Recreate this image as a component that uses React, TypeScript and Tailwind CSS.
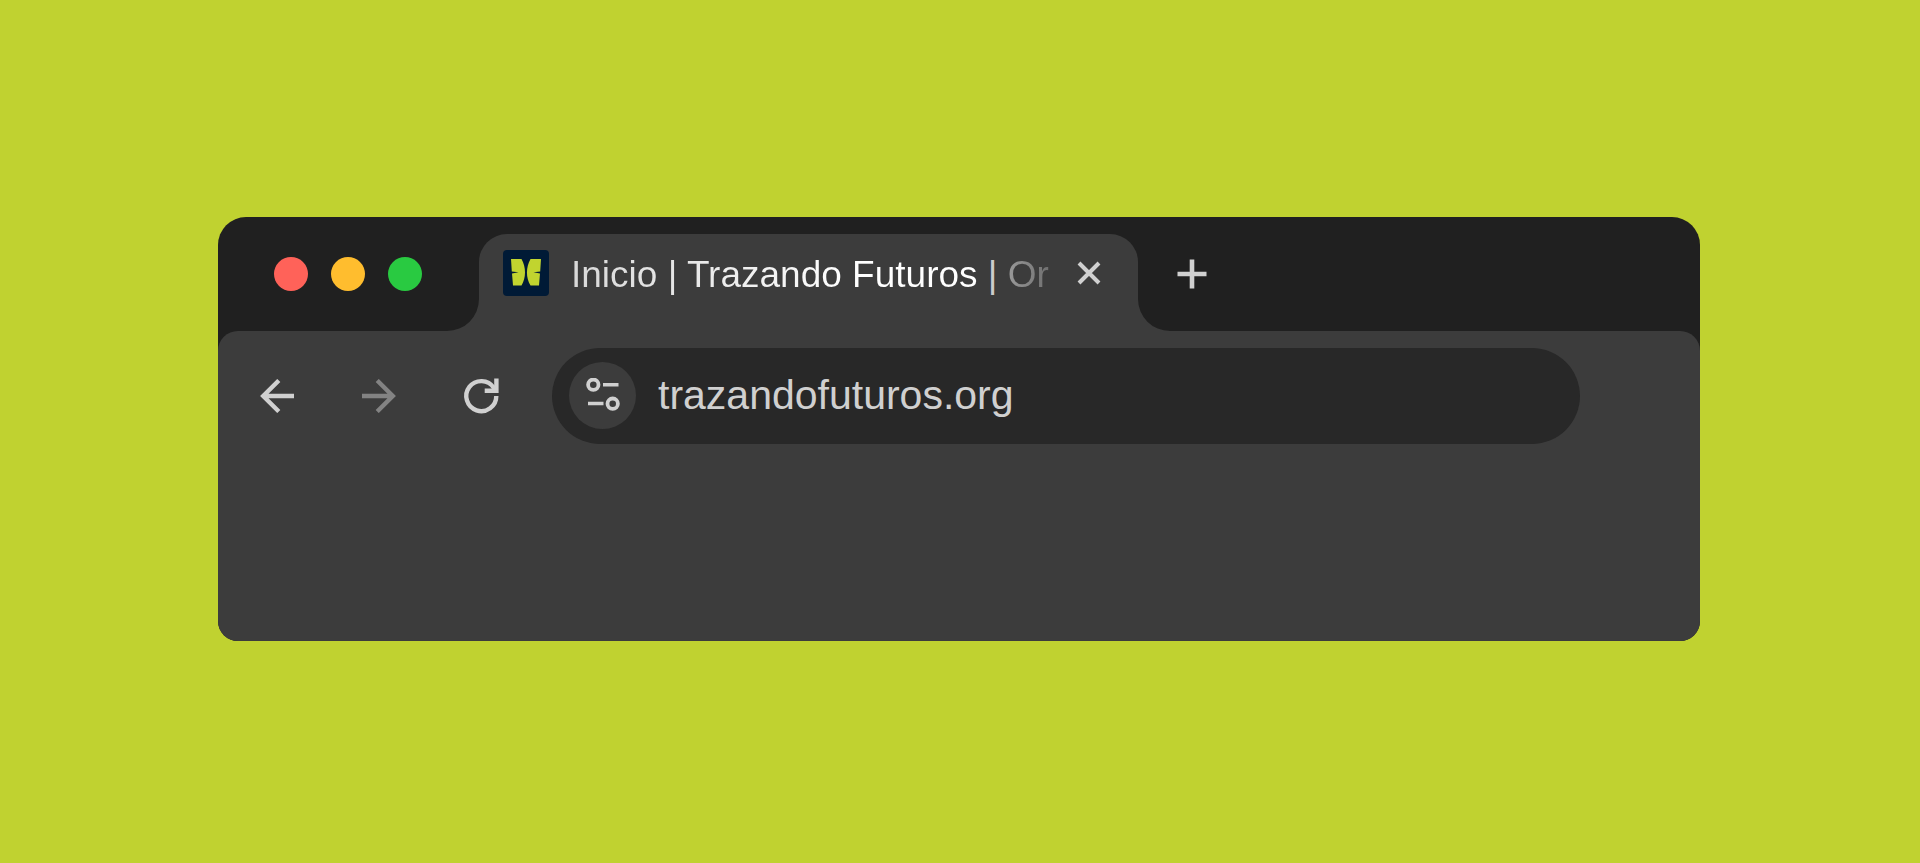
function TrafficLights() {
  return (
    <div className="flex shrink-0 gap-[23px]">
      <button type="button" aria-label="Close window" className="size-[34px] rounded-full bg-[#ff6259]" />
      <button type="button" aria-label="Minimize window" className="size-[34px] rounded-full bg-[#ffbd2e]" />
      <button type="button" aria-label="Maximize window" className="size-[34px] rounded-full bg-[#29ca41]" />
    </div>
  );
}

function Favicon() {
  return (
    <svg viewBox="0 0 46 46" className="size-[46px] shrink-0" aria-hidden="true">
      <rect width="46" height="46" rx="4" fill="#001a36" />
      <g fill="#c1d42f">
        <path d="M8 9H18.500C23.200 17 23.200 28 18.500 35.500H10L9 23.500L15.500 22.300L8.800 21.500Z" />
        <path d="M38 9H27.500C22.800 17 22.800 28 27.500 35.500H36L37 23.500L30.500 22.300L37.200 21.500Z" />
      </g>
    </svg>
  );
}

function TabFlare({ flip = false }: { flip?: boolean }) {
  return (
    <svg
      viewBox="0 0 32 32"
      className={flip ? "size-8 shrink-0 -scale-x-100 self-end" : "size-8 shrink-0 self-end"}
      aria-hidden="true"
    >
      <path d="M32 0V32H0A32 32 0 0 0 32 0Z" fill="#3c3c3c" />
    </svg>
  );
}

function Tab() {
  return (
    <div className="flex h-[97px] w-[659px] shrink-0 items-center rounded-t-[28px] bg-[#3c3c3c] pb-5 pl-6">
      <Favicon />
      <span className="ml-[22px] w-[484px] whitespace-nowrap pt-1 text-[37px] leading-[46px]">
        <span className="bg-linear-to-r from-[#d8d8d8] to-white to-70% bg-clip-text text-transparent">
          Inicio | Trazando Futuros
        </span>
        <span className="text-[#cccccc]"> | </span>
        <span className="bg-linear-to-r from-[#999999] to-[#707070] bg-clip-text text-transparent">Or</span>
      </span>
      <button type="button" aria-label="Close tab" className="ml-[22px] shrink-0">
        <svg viewBox="0 0 24 24" className="size-6" fill="none" stroke="#d0d0d0" strokeWidth="4">
          <path d="M2 2L22 22M22 2L2 22" />
        </svg>
      </button>
    </div>
  );
}

function TabStrip() {
  return (
    <div className="flex h-[114px] items-end pl-14">
      <div className="flex h-[114px] shrink-0 items-center">
        <TrafficLights />
      </div>
      <div className="ml-[25px] flex h-[97px] shrink-0">
        <TabFlare />
        <Tab />
        <TabFlare flip />
      </div>
      <button type="button" aria-label="New tab" className="mb-[42px] ml-[7px] shrink-0">
        <svg viewBox="0 0 30 30" className="size-[30px]" fill="none" stroke="#d0d0d0" strokeWidth="4.600">
          <path d="M15 0.500V29.500M0.500 15H29.500" />
        </svg>
      </button>
    </div>
  );
}

function ArrowIcon() {
  return (
    <svg viewBox="0 0 34 34" className="size-[34px]" fill="none" stroke="currentColor" strokeWidth="4.400">
      <path d="M34 17H3M18.800 1.500L3.200 17L18.800 32.500" />
    </svg>
  );
}

function NavButtons() {
  return (
    <div className="flex shrink-0 items-center gap-[68px]">
      <button type="button" aria-label="Back" className="text-[#d0d0d0]">
        <ArrowIcon />
      </button>
      <button type="button" aria-label="Forward" disabled className="-scale-x-100 text-[#838383]">
        <ArrowIcon />
      </button>
      <button type="button" aria-label="Reload">
        <svg
          viewBox="0 0 34 34"
          className="size-[34px] overflow-visible"
          fill="none"
          stroke="#d0d0d0"
          strokeWidth="4.400"
        >
          <path d="M32.300 17A15 15 0 1 1 29.800 8.800L31.500 11.800" />
          <path d="M32.400 -0.500V11.700H20.700" />
        </svg>
      </button>
    </div>
  );
}

function AddressBar() {
  return (
    <div className="ml-[54px] flex h-24 min-w-0 flex-1 items-center rounded-full bg-[#282828] pb-0.5 pl-[17px] pr-10">
      <button
        type="button"
        aria-label="View site information"
        className="flex size-[67px] shrink-0 items-center justify-center rounded-full bg-[#3c3c3c]"
      >
        <svg viewBox="0 0 34 34" className="size-[34px]" fill="none" stroke="#d0d0d0" strokeWidth="3.800">
          <circle cx="7.300" cy="6.700" r="5.200" />
          <path d="M17 6.700H32.500M2 25.500H17.500" strokeWidth="3.500" />
          <circle cx="26.700" cy="25.700" r="5.200" />
        </svg>
      </button>
      <input
        type="text"
        aria-label="Address"
        defaultValue="trazandofuturos.org"
        className="ml-[22px] h-12 min-w-0 flex-1 bg-transparent text-[41px] leading-[48px] text-[#d0d0d0] outline-none"
      />
    </div>
  );
}

export default function App() {
  return (
    <main className="flex min-h-screen items-center bg-[#c0d230] pb-[5px] pl-[218px] pr-[220px] font-['Liberation_Sans',Arial,sans-serif]">
      <section className="min-w-0 flex-1 overflow-hidden rounded-t-[28px] rounded-b-[20px] bg-[#202020]">
        <TabStrip />
        <div className="rounded-t-[20px] bg-[#3c3c3c] pb-[197px] pl-[42px] pr-[120px] pt-[17px]">
          <div className="flex items-center">
            <NavButtons />
            <AddressBar />
          </div>
        </div>
      </section>
    </main>
  );
}
